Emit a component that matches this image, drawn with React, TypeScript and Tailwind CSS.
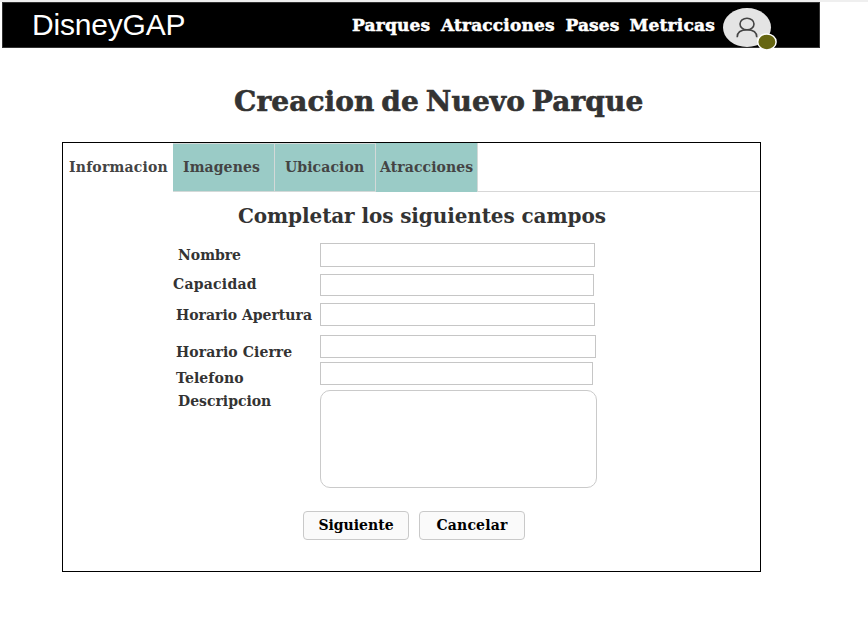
const navItems = [
  { text: "Parques", className: "w-[89px] tracking-[0.2px]" },
  { text: "Atracciones", className: "w-[124.5px] tracking-[0.15px]" },
  { text: "Pases", className: "w-[64px] tracking-[0.1px]" },
  { text: "Metricas", className: "w-[88px] tracking-[0.2px]" },
];

const tabs = [
  { text: "Informacion", className: "w-[110px] pt-px pl-[6px] tracking-[0.2px]" },
  { text: "Imagenes", className: "w-[102px] border-r border-b border-t border-[#d3d9d8] bg-[#9acbc6] pl-[10px] tracking-[0.1px]" },
  { text: "Ubicacion", className: "w-[101px] border-r border-b border-t border-[#d3d9d8] bg-[#9acbc6] pl-[10px] tracking-[0.1px]" },
  { text: "Atracciones", className: "w-[102px] border-r border-[#d3d9d8] bg-[#9acbc6] pt-px pl-[4px] tracking-[0.1px]" },
];

const fields = [
  { text: "Nombre", row: "h-[31px]", label: "pt-[2px] pl-[5px]", input: "h-[24px] w-[275px]" },
  { text: "Capacidad", row: "h-[29px]", label: "tracking-[0.25px]", input: "h-[22px] w-[274px]" },
  { text: "Horario Apertura", row: "h-[32px]", label: "pt-[2px] pl-[3px]", input: "h-[23px] w-[275px]" },
  { text: "Horario Cierre", row: "h-[27px]", label: "pt-[7px] pl-[3px] tracking-[0.1px]", input: "h-[23px] w-[276px]" },
  { text: "Telefono", row: "h-[28px]", label: "pt-[6px] pl-[3px] tracking-[0.1px]", input: "h-[23px] w-[273px]" },
];

function Header() {
  return (
    <header className="ml-[2px] flex h-[46px] w-[818px] border border-[#333] bg-black text-white">
      <div className="w-[349px] shrink-0 pt-[4px] pl-[29px] font-['Liberation_Sans',Arial,sans-serif] text-[30px] leading-[36px] tracking-[-0.2px]">
        DisneyGAP
      </div>
      <nav className="flex w-[371px] shrink-0 pt-[10px] text-[17px] leading-[24px] font-bold [-webkit-text-stroke:0.5px_white]">
        {navItems.map((n) => (
          <a key={n.text} className={`block h-[30px] shrink-0 whitespace-nowrap ${n.className}`}>
            {n.text}
          </a>
        ))}
      </nav>
      <svg className="mt-[4px] h-[44px] w-[56px] shrink-0" viewBox="0 0 56 44">
        <ellipse cx="24" cy="20.5" rx="24" ry="19.5" fill="#e4e4e4" />
        <g fill="none" stroke="#444" strokeWidth="1.6">
          <ellipse cx="24" cy="17" rx="7" ry="5.8" />
          <path d="M14.2 30.2 C14.2 24.8 18.3 22.8 24 22.8 C29.7 22.8 33.8 24.8 33.8 30.2" />
        </g>
        <ellipse cx="43.9" cy="34.9" rx="9.2" ry="8" fill="#666611" stroke="#fff" strokeWidth="1.5" />
      </svg>
    </header>
  );
}

export default function App() {
  return (
    <div className="h-[632px] w-[868px] overflow-hidden bg-white font-['DejaVu_Serif',serif] text-[#333]">
      <div className="h-[2px] bg-[#efefef]" />
      <Header />
      <h1 className="mt-[36px] ml-[234px] h-[58px] text-[28px] leading-[36px] font-bold tracking-[0.1px] whitespace-nowrap [-webkit-text-stroke:0.6px_#333] [word-spacing:-3px]">
        Creacion de Nuevo Parque
      </h1>
      <main className="ml-[62px] h-[430px] w-[699px] border border-black">
        <div className="flex h-[49px] text-[14px] leading-[47px] font-bold text-[#444]">
          {tabs.map((t, i) => (
            <div key={i} className={`h-[49px] shrink-0 whitespace-nowrap ${t.className}`}>
              {t.text}
            </div>
          ))}
          <div className="grow border-b border-[#d7d7d7]" />
        </div>
        <h2 className="ml-[175px] h-[51px] pt-[10px] text-[20px] leading-[28px] font-bold tracking-[-0.1px] whitespace-nowrap">
          Completar los siguientes campos
        </h2>
        <form className="ml-[110px] text-[14px] leading-[20px] font-bold">
          {fields.map((f) => (
            <div key={f.text} className={`flex items-start ${f.row}`}>
              <label className={`w-[147px] shrink-0 whitespace-nowrap ${f.label}`}>{f.text}</label>
              <input className={`border border-[#c6c6c6] bg-white ${f.input}`} />
            </div>
          ))}
          <div className="flex items-start">
            <label className="w-[147px] shrink-0 pt-px pl-[5px]">Descripcion</label>
            <textarea className="block h-[98px] w-[277px] resize-none rounded-[10px] border border-[#cacaca] bg-white" />
          </div>
          <div className="mt-[23px] ml-[130px] flex gap-[10px] text-black">
            <button type="button" className="h-[29px] w-[106px] rounded-[4px] border border-[#c9c9c9] bg-[#fafafa] pb-[2px]">
              Siguiente
            </button>
            <button type="button" className="h-[29px] w-[106px] rounded-[4px] border border-[#c9c9c9] bg-[#fafafa] pb-[2px] tracking-[0.2px]">
              Cancelar
            </button>
          </div>
        </form>
      </main>
    </div>
  );
}
